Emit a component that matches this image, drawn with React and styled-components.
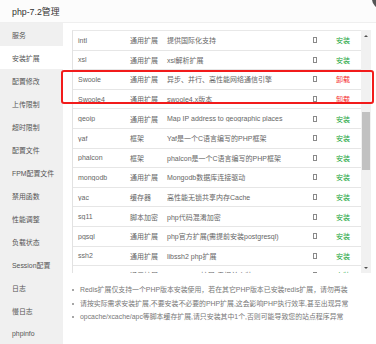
import React from "react";
import styled, { createGlobalStyle } from "styled-components";

const Global = createGlobalStyle`
  html, body { margin: 0; padding: 0; background: #fff; }
  body { font-family: "Liberation Sans", "Noto Sans CJK SC", sans-serif; }
  * { box-sizing: border-box; }
`;

const Window = styled.div`
  position: relative;
  width: 376px;
  height: 344px;
  overflow: hidden;
  background: #fff;
  font-family: "Liberation Sans", "Noto Sans CJK SC", sans-serif;
`;

const TitleBar = styled.div`
  height: 23px;
  padding-left: 12px;
  display: flex;
  align-items: center;
  font-size: 8.8px;
  color: #333;
  background: #fcfcfc;
  border-bottom: 1px solid #efefef;
`;

const CloseDot = styled.div`
  position: absolute;
  left: 372px;
  top: -11px;
  width: 20px;
  height: 20px;
  border-radius: 50%;
  background: #555;
`;

const Body = styled.div`
  display: flex;
  height: 321px;
`;

const Sidebar = styled.nav`
  width: 63px;
  flex: none;
  background: #f0f0f0;
  display: flex;
  flex-direction: column;
`;

const NavItem = styled.div`
  height: 23px;
  flex: none;
  padding-left: 12px;
  display: flex;
  align-items: center;
  font-size: 6.9px;
  color: #555;
  white-space: nowrap;
  background: ${(p) => (p.$active ? "#fff" : "transparent")};
`;

const Main = styled.div`
  flex: 1;
  padding: 7px 5px 0 9px;
  display: flex;
  flex-direction: column;
`;

const TableWrap = styled.div`
  display: flex;
  height: 243px;
`;

const TableBox = styled.div`
  flex: 1;
  overflow: hidden;
  border-left: 1px solid #e2e2e2;
  border-top: 1px solid #e8e8e8;
`;

const Row = styled.div`
  display: grid;
  grid-template-columns: 52px 37px 146px 23px 1fr;
  height: 19.6px;
  flex: none;
  align-items: center;
  border-bottom: 1px solid #e6e6e6;
  font-size: 7px;
  color: #666;
`;

const Cell = styled.div`
  padding-left: 5px;
  white-space: nowrap;
  overflow: hidden;
  display: flex;
  align-items: center;
  color: ${(p) => p.$color || "inherit"};
`;

const Box = styled.span`
  display: inline-block;
  width: 4px;
  height: 6px;
  border: 1px solid #8a8a8a;
`;

const Scrollbar = styled.div`
  width: 10px;
  flex: none;
  background: #f1f1f1;
  display: flex;
  flex-direction: column;
  align-items: center;
`;

const Arrow = styled.div`
  height: 11px;
  width: 10px;
  flex: none;
  display: flex;
  align-items: center;
  justify-content: center;
  margin-top: ${(p) => (p.$down ? "auto" : "0")};
  &::before {
    content: "";
    width: 0;
    height: 0;
    border-left: 2.5px solid transparent;
    border-right: 2.5px solid transparent;
    ${(p) =>
      p.$down
        ? "border-top: 2.5px solid #505050;"
        : "border-bottom: 2.5px solid #505050;"}
  }
`;

const Thumb = styled.div`
  width: 8px;
  height: 58px;
  flex: none;
  margin-top: 71px;
  background: #c1c1c1;
`;

const Tips = styled.ul`
  list-style: none;
  margin: 10px 0 0 0;
  padding: 0;
`;

const Tip = styled.li`
  position: relative;
  height: 13.5px;
  line-height: 13.5px;
  padding-left: 8px;
  font-size: 6.9px;
  color: #777;
  white-space: nowrap;
  &::before {
    content: "";
    position: absolute;
    left: 0;
    top: 6px;
    width: 2px;
    height: 2px;
    border-radius: 50%;
    background: #888;
  }
`;

const Highlight = styled.div`
  position: absolute;
  left: 61px;
  top: 70px;
  width: 313px;
  height: 34px;
  border: 2px solid #f21b1b;
  border-radius: 3px;
  pointer-events: none;
`;

const nav = [
  "服务",
  "安装扩展",
  "配置修改",
  "上传限制",
  "超时限制",
  "配置文件",
  "FPM配置文件",
  "禁用函数",
  "性能调整",
  "负载状态",
  "Session配置",
  "日志",
  "慢日志",
  "phpinfo",
];

const rows = [
  ["intl", "通用扩展", "提供国际化支持", false],
  ["xsl", "通用扩展", "xsl解析扩展", false],
  ["Swoole", "通用扩展", "异步、并行、高性能网络通信引擎", true],
  ["Swoole4", "通用扩展", "swoole4.x版本", true],
  ["geoip", "通用扩展", "Map IP address to geographic places", false],
  ["yaf", "框架", "Yaf是一个C语言编写的PHP框架", false],
  ["phalcon", "框架", "phalcon是一个C语言编写的PHP框架", false],
  ["mongodb", "通用扩展", "Mongodb数据库连接驱动", false],
  ["yac", "缓存器", "高性能无锁共享内存Cache", false],
  ["sg11", "脚本加密", "php代码混淆加密", false],
  ["pgsql", "通用扩展", "php官方扩展(需提前安装postgresql)", false],
  ["ssh2", "通用扩展", "libssh2 php扩展", false],
  ["pdo_pgsql", "通用扩展", "pgsql PDO扩展(需提前安装postgresql)", false],
];

const tips = [
  "Redis扩展仅支持一个PHP版本安装使用，若在其它PHP版本已安装redis扩展，请勿再装",
  "请按实际需求安装扩展,不要安装不必要的PHP扩展,这会影响PHP执行效率,甚至出现异常",
  "opcache/xcache/apc等脚本缓存扩展,请只安装其中1个,否则可能导致您的站点程序异常",
];

export default function App() {
  return (
    <Window>
      <Global />
      <TitleBar>php-7.2管理</TitleBar>
      <CloseDot />
      <Body>
        <Sidebar>
          {nav.map((n, i) => (
            <NavItem key={n} $active={i === 1}>
              {n}
            </NavItem>
          ))}
        </Sidebar>
        <Main>
          <TableWrap>
            <TableBox>
              {rows.map(([name, type, desc, installed]) => (
                <Row key={name}>
                  <Cell>{name}</Cell>
                  <Cell>{type}</Cell>
                  <Cell>{desc}</Cell>
                  <Cell>
                    <Box />
                  </Cell>
                  <Cell $color={installed ? "#f52b2b" : "#20a53a"}>
                    {installed ? "卸载" : "安装"}
                  </Cell>
                </Row>
              ))}
            </TableBox>
            <Scrollbar>
              <Arrow />
              <Thumb />
              <Arrow $down />
            </Scrollbar>
          </TableWrap>
          <Tips>
            {tips.map((t) => (
              <Tip key={t}>{t}</Tip>
            ))}
          </Tips>
        </Main>
      </Body>
      <Highlight />
    </Window>
  );
}
